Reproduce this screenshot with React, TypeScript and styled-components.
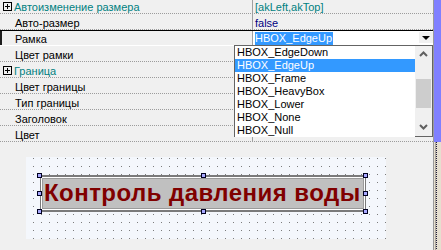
import React from "react";
import styled, { createGlobalStyle } from "styled-components";

const GlobalStyle = createGlobalStyle`
    html, body { margin: 0; padding: 0; background: #f0f0f0; overflow: hidden; }
    body { font-family: "Liberation Sans", Arial, sans-serif; font-size: 11px; }
`;

// Whole window: inspector + designer on the left, thin strip on the right
const Screen = styled.div`
    display: flex; width: 441px; height: 250px; overflow: hidden;
    background: #f0f0f0;
`;
const MainColumn = styled.div`
    display: flex; flex-direction: column; width: 433px;
    position: relative;
`;
const SideStrip = styled.div`
    display: flex; flex-direction: column; width: 7px;
    border-left: 1px solid #9a9a9a;
`;
const SideTop = styled.div`
    height: 142px; background: #8080ff;
`;
const SideBottom = styled.div`
    flex: 1;
    background:
        repeating-linear-gradient(to bottom, #1a1a3a 0 1px, #e6dfcf 1px 2px) 2px 0 / 1px 100% no-repeat,
        linear-gradient(#a9a29a, #a9a29a) 1px 0 / 1px 100% no-repeat,
        #e6dfcf;
`;

// Property grid
const Grid = styled.div`
    display: flex; flex-direction: column; margin-top: -2px;
`;
const Row = styled.div<{ $sunken?: boolean }>`
    display: flex; height: 16px; box-sizing: border-box;
    border-bottom: 1px dotted #9c9c9c;
    ${(p) => p.$sunken && `
        border-top: 1px solid #000;
        border-bottom: 1px solid #fff;
        box-shadow: inset 2px 0 0 #1e1e1e;
    `}
`;
const NameCell = styled.div<{ $category?: boolean }>`
    display: flex; align-items: center; gap: 2px;
    width: 253px; flex-shrink: 0; box-sizing: border-box;
    border-right: 1px solid #a0a0a0;
    padding: 2px 0 0 ${(p) => (p.$category ? "3px" : "15px")};
    color: ${(p) => (p.$category ? "#008080" : "#000")};
    white-space: nowrap;
`;
const ValueCell = styled.div<{ $color?: string; $editing?: boolean }>`
    flex: 1; display: flex; align-items: center;
    padding: 2px 0 0 2px;
    color: ${(p) => p.$color || "#000"};
    background: ${(p) => (p.$editing ? "#fff" : "transparent")};
    white-space: nowrap; position: relative;
`;
const PlusBox = styled.span`
    width: 9px; height: 9px; box-sizing: border-box;
    border: 1px solid #000; position: relative; margin-top: -1px;
    &::before { content: ""; position: absolute; left: 1px; top: 3px; width: 5px; height: 1px; background: #000; }
    &::after { content: ""; position: absolute; left: 3px; top: 1px; width: 1px; height: 5px; background: #000; }
`;
const Selected = styled.span`
    background: #3399ff; color: #fff; padding: 0 1px 1px 0; margin-top: -1px; line-height: 13px;
`;
const DropButton = styled.div`
    position: absolute; right: 0; top: 1px;
    width: 14px; height: 11px; background: #f0f0f0;
    display: flex; align-items: center; justify-content: center;
    &::after {
        content: ""; border-left: 4px solid transparent; border-right: 4px solid transparent;
        border-top: 4px solid #000;
    }
`;

// Drop-down list of the combo
const ListBox = styled.div`
    position: absolute; left: 234px; top: 45px; width: 199px; height: 92px;
    box-sizing: border-box; border: 1px solid #646464; background: #fff;
    display: flex;
`;
const Items = styled.div`
    flex: 1; display: flex; flex-direction: column;
`;
const Item = styled.div<{ $active?: boolean }>`
    height: 13px; line-height: 13px; padding-left: 2px;
    background: ${(p) => (p.$active ? "#3399ff" : "#fff")};
    color: ${(p) => (p.$active ? "#fff" : "#000")};
`;
const ScrollBar = styled.div`
    width: 17px; background: #f0f0f0;
    display: flex; flex-direction: column; align-items: center;
`;
const ScrollArrow = styled.svg`
    width: 17px; height: 17px; flex-shrink: 0;
`;
const ScrollTrack = styled.div`
    flex: 1; width: 100%; display: flex; flex-direction: column; padding-top: 16px;
`;
const Thumb = styled.div`
    height: 29px; margin: 0 1px; background: #cdcdcd;
`;

// Form designer
const Designer = styled.div`
    flex: 1; padding: 15px 0 0 26px;
`;
const Canvas = styled.div`
    width: 360px; height: 82px; box-sizing: border-box;
    padding: 18px 0 0 14px; position: relative;
    background:
        conic-gradient(at 1px 1px, #0000 75%, #7c7c7c 0) 7px 1px / 8px 8px,
        #f4f7fc;
`;
const LabelFrame = styled.div`
    width: 326px; height: 37px; box-sizing: border-box; position: relative;
    border: 1px solid #7a7a7a; border-top-width: 2px; border-bottom-width: 2px;
    background: #fff; padding: 1px;
`;
const LabelFace = styled.div`
    height: 100%; box-sizing: border-box; border: 1px solid #9a9a9a;
    background: #c0c0c0; color: #800000; overflow: hidden;
    font-family: "Liberation Sans", Arial, sans-serif; font-weight: bold; font-size: 24px;
    letter-spacing: 0.45px; line-height: 28px; white-space: nowrap; padding-left: 1px;
`;
const Handle = styled.div<{ $x: string; $y: string }>`
    position: absolute; width: 5px; height: 5px; box-sizing: border-box;
    border: 1px solid #000020; background: #a8a8ff;
    left: ${(p) => p.$x}; top: ${(p) => p.$y};
`;

type Prop = { name: string; value?: string; color?: string; category?: boolean };
const props: Prop[] = [
    { name: "Автоизменение размера", value: "[akLeft,akTop]", color: "#008080", category: true },
    { name: "Авто-размер", value: "false", color: "#000080" },
    { name: "Рамка" },
    { name: "Цвет рамки" },
    { name: "Граница", category: true },
    { name: "Цвет границы" },
    { name: "Тип границы" },
    { name: "Заголовок" },
    { name: "Цвет" },
];
const frameKinds = ["HBOX_EdgeDown", "HBOX_EdgeUp", "HBOX_Frame", "HBOX_HeavyBox", "HBOX_Lower", "HBOX_None", "HBOX_Null"];
const handles: [string, string][] = [
    ["-4px", "-4px"], ["160px", "-4px"], ["322px", "-4px"],
    ["-4px", "14px"], ["322px", "14px"],
    ["-4px", "32px"], ["160px", "32px"], ["322px", "32px"],
];

export default function App() {
    return (
        <Screen>
            <GlobalStyle />
            <MainColumn>
                <Grid>
                    {props.map((p) => {
                        const editing = p.name === "Рамка";
                        return (
                            <Row key={p.name} $sunken={editing}>
                                <NameCell $category={p.category}>
                                    {p.category && <PlusBox />}
                                    <span>{p.name}</span>
                                </NameCell>
                                <ValueCell $color={p.color} $editing={editing}>
                                    {editing ? (
                                        <>
                                            <Selected>HBOX_EdgeUp</Selected>
                                            <DropButton />
                                        </>
                                    ) : p.value}
                                </ValueCell>
                            </Row>
                        );
                    })}
                </Grid>
                <ListBox>
                    <Items>
                        {frameKinds.map((k) => (
                            <Item key={k} $active={k === "HBOX_EdgeUp"}>{k}</Item>
                        ))}
                    </Items>
                    <ScrollBar>
                        <ScrollArrow viewBox="0 0 17 17">
                            <polyline points="5,10 8.5,6.5 12,10" fill="none" stroke="#606060" strokeWidth="2" />
                        </ScrollArrow>
                        <ScrollTrack><Thumb /></ScrollTrack>
                        <ScrollArrow viewBox="0 0 17 17">
                            <polyline points="5,6 8.5,9.5 12,6" fill="none" stroke="#606060" strokeWidth="2" />
                        </ScrollArrow>
                    </ScrollBar>
                </ListBox>
                <Designer>
                    <Canvas>
                        <LabelFrame>
                            <LabelFace>Контроль давления воды</LabelFace>
                            {handles.map(([x, y]) => (
                                <Handle key={x + y} $x={x} $y={y} />
                            ))}
                        </LabelFrame>
                    </Canvas>
                </Designer>
            </MainColumn>
            <SideStrip>
                <SideTop />
                <SideBottom />
            </SideStrip>
        </Screen>
    );
}
